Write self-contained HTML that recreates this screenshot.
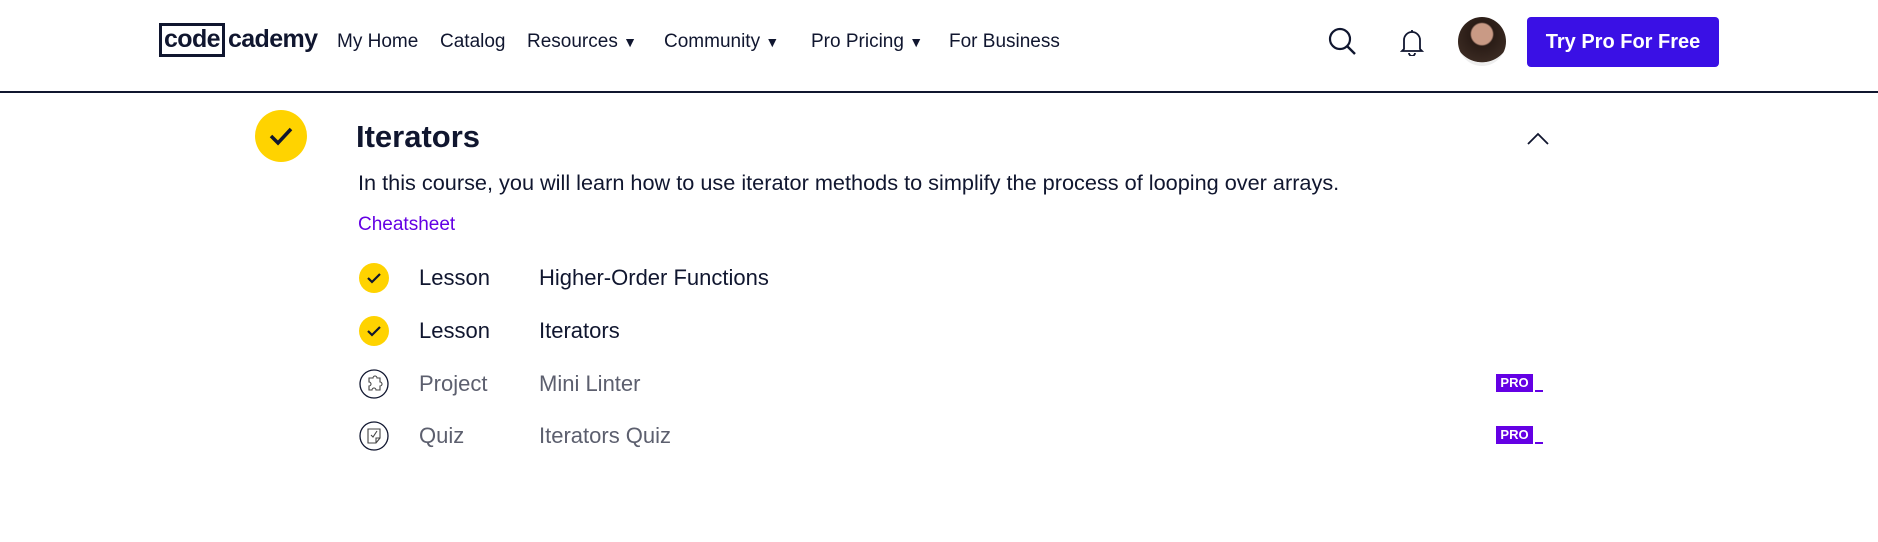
<!DOCTYPE html>
<html><head><meta charset="utf-8"><style>
*{margin:0;padding:0;box-sizing:border-box}
body{width:1878px;height:542px;background:#fff;font-family:"Liberation Sans",sans-serif;color:#10162f;position:relative;overflow:hidden}
.a{position:absolute;white-space:nowrap}
.nav{font-size:19px;top:31px;color:#10162f}
.hdr{position:absolute;left:0;top:91px;width:1878px;height:2px;background:#10162f}
.logo{left:159px;top:23px;height:34px}
.box{position:absolute;left:0;top:0;width:66px;height:34px;border:3px solid #10162f}
.lt{position:absolute;left:5px;top:2px;font-size:25px;font-weight:bold;letter-spacing:-0.6px}
.btn{left:1527px;top:17px;width:192px;height:50px;background:#3a10e5;border-radius:4px;color:#fff;font-weight:bold;font-size:20px;text-align:center;line-height:50px}
.chk{border-radius:50%;background:#ffd300}
.row{font-size:22px;}
.pro{background:#6400e4;color:#fff;font-weight:bold;font-size:13px;width:37px;height:18px;line-height:18px;text-align:center}
</style></head><body>
<div class="a logo"><div class="box"></div><div class="lt">code<span style="margin-left:8px">cademy</span></div></div>
<div class="a nav" style="left:337px">My Home</div>
<div class="a nav" style="left:440px">Catalog</div>
<div class="a nav" style="left:527px">Resources <span style="font-size:14px">▼</span></div>
<div class="a nav" style="left:664px">Community <span style="font-size:14px">▼</span></div>
<div class="a nav" style="left:811px">Pro Pricing <span style="font-size:14px">▼</span></div>
<div class="a nav" style="left:949px">For Business</div>
<svg class="a" style="left:1327px;top:26px" width="32" height="32" viewBox="0 0 32 32"><circle cx="13" cy="13" r="10" fill="none" stroke="#10162f" stroke-width="2.2"/><path d="M20.5 20.5L28 28" stroke="#10162f" stroke-width="2.4"/></svg>
<svg class="a" style="left:1400px;top:28px" width="24" height="28" viewBox="0 0 24 28"><path d="M4 21V12a8 8 0 0 1 16 0v9l2 2H2z M12 2v2 M9 25a3 3 0 0 0 6 0" fill="none" stroke="#10162f" stroke-width="1.8"/></svg>
<div class="a" style="left:1458px;top:17px;width:48px;height:49px;border-radius:50%;background:radial-gradient(circle at 50% 35%,#c99a85 0 26%,#2a1c16 30%,#3a2a22 70%,#eee 71%)"></div>
<div class="a btn">Try Pro For Free</div>
<div class="hdr"></div>
<div class="a chk" style="left:255px;top:110px;width:52px;height:52px"></div>
<svg class="a" style="left:255px;top:110px" width="52" height="52" viewBox="0 0 52 52"><path d="M16 26l7 7 13-14" fill="none" stroke="#10162f" stroke-width="3.5"/></svg>
<div class="a" style="left:356px;top:119px;font-size:31px;font-weight:bold">Iterators</div>
<svg class="a" style="left:1526px;top:132px" width="24" height="14" viewBox="0 0 24 14"><path d="M2 12L12 2l10 10" fill="none" stroke="#10162f" stroke-width="1.8"/></svg>
<div class="a" style="left:358px;top:170px;font-size:21.7px">In this course, you will learn how to use iterator methods to simplify the process of looping over arrays.</div>
<div class="a" style="left:358px;top:214px;font-size:19px;color:#6400e4">Cheatsheet</div>

<div class="a chk" style="left:359px;top:263px;width:30px;height:30px"></div>
<svg class="a" style="left:359px;top:263px" width="30" height="30" viewBox="0 0 30 30"><path d="M9 15l4 4 8-8" fill="none" stroke="#10162f" stroke-width="2.2"/></svg>
<div class="a row" style="left:419px;top:265px">Lesson</div>
<div class="a row" style="left:539px;top:265px">Higher-Order Functions</div>

<div class="a chk" style="left:359px;top:316px;width:30px;height:30px"></div>
<svg class="a" style="left:359px;top:316px" width="30" height="30" viewBox="0 0 30 30"><path d="M9 15l4 4 8-8" fill="none" stroke="#10162f" stroke-width="2.2"/></svg>
<div class="a row" style="left:419px;top:318px">Lesson</div>
<div class="a row" style="left:539px;top:318px">Iterators</div>

<svg class="a" style="left:359px;top:369px" width="30" height="30" viewBox="0 0 30 30"><circle cx="15" cy="15" r="14" fill="none" stroke="#10162f" stroke-width="1.3"/><path d="M10 9h4a2 2 0 0 1 4 0h3v4a2 2 0 0 1 0 4v4h-4a2 2 0 0 0-4 0h-3v-4a2 2 0 0 0 0-4z" fill="none" stroke="#444" stroke-width="1.1"/></svg>
<div class="a row" style="left:419px;top:371px;color:#5c5f6e">Project</div>
<div class="a row" style="left:539px;top:371px;color:#5c5f6e">Mini Linter</div>
<div class="a pro" style="left:1496px;top:374px">PRO</div>
<div class="a" style="left:1535px;top:390px;width:8px;height:2px;background:#6400e4"></div>

<svg class="a" style="left:359px;top:421px" width="30" height="30" viewBox="0 0 30 30"><circle cx="15" cy="15" r="14" fill="none" stroke="#10162f" stroke-width="1.3"/><path d="M9 8h12v9l-4 5H9z M17 22v-5h4 M12 14l2 2 4-6" fill="none" stroke="#444" stroke-width="1.1"/></svg>
<div class="a row" style="left:419px;top:423px;color:#5c5f6e">Quiz</div>
<div class="a row" style="left:539px;top:423px;color:#5c5f6e">Iterators Quiz</div>
<div class="a pro" style="left:1496px;top:426px">PRO</div>
<div class="a" style="left:1535px;top:442px;width:8px;height:2px;background:#6400e4"></div>
</body></html>
